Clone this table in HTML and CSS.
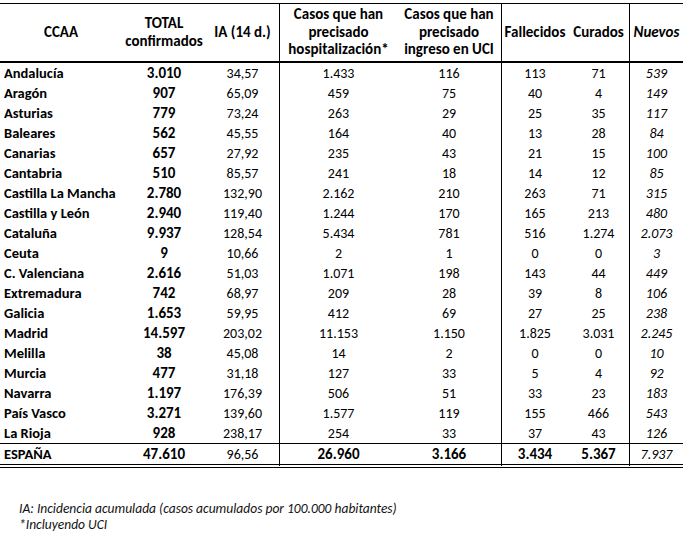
FILE: index.html
```html
<!DOCTYPE html>
<html lang="es">
<head>
<meta charset="utf-8">
<title>Casos COVID-19 por CCAA</title>
<link rel="stylesheet" href="styles.css">
</head>
<body>
<table class="data">
  <colgroup>
    <col class="c1"><col class="c2"><col class="c3"><col class="c4"><col class="c5"><col class="c6"><col class="c7"><col class="c8">
  </colgroup>
  <thead>
    <tr>
      <th>CCAA</th>
      <th>TOTAL<br>confirmados</th>
      <th>IA (14 d.)</th>
      <th class="sep">Casos que han<br>precisado<br>hospitalización*</th>
      <th>Casos que han<br>precisado<br>ingreso en UCI</th>
      <th class="sep">Fallecidos</th>
      <th>Curados</th>
      <th class="sep it">Nuevos</th>
    </tr>
  </thead>
  <tbody>
    <tr><td class="name">Andalucía</td><td class="b">3.010</td><td>34,57</td><td class="sep">1.433</td><td>116</td><td class="sep">113</td><td>71</td><td class="sep it">539</td></tr>
    <tr><td class="name">Aragón</td><td class="b">907</td><td>65,09</td><td class="sep">459</td><td>75</td><td class="sep">40</td><td>4</td><td class="sep it">149</td></tr>
    <tr><td class="name">Asturias</td><td class="b">779</td><td>73,24</td><td class="sep">263</td><td>29</td><td class="sep">25</td><td>35</td><td class="sep it">117</td></tr>
    <tr><td class="name">Baleares</td><td class="b">562</td><td>45,55</td><td class="sep">164</td><td>40</td><td class="sep">13</td><td>28</td><td class="sep it">84</td></tr>
    <tr><td class="name">Canarias</td><td class="b">657</td><td>27,92</td><td class="sep">235</td><td>43</td><td class="sep">21</td><td>15</td><td class="sep it">100</td></tr>
    <tr><td class="name">Cantabria</td><td class="b">510</td><td>85,57</td><td class="sep">241</td><td>18</td><td class="sep">14</td><td>12</td><td class="sep it">85</td></tr>
    <tr><td class="name">Castilla La Mancha</td><td class="b">2.780</td><td>132,90</td><td class="sep">2.162</td><td>210</td><td class="sep">263</td><td>71</td><td class="sep it">315</td></tr>
    <tr><td class="name">Castilla y León</td><td class="b">2.940</td><td>119,40</td><td class="sep">1.244</td><td>170</td><td class="sep">165</td><td>213</td><td class="sep it">480</td></tr>
    <tr><td class="name">Cataluña</td><td class="b">9.937</td><td>128,54</td><td class="sep">5.434</td><td>781</td><td class="sep">516</td><td>1.274</td><td class="sep it">2.073</td></tr>
    <tr><td class="name">Ceuta</td><td class="b">9</td><td>10,66</td><td class="sep">2</td><td>1</td><td class="sep">0</td><td>0</td><td class="sep it">3</td></tr>
    <tr><td class="name">C. Valenciana</td><td class="b">2.616</td><td>51,03</td><td class="sep">1.071</td><td>198</td><td class="sep">143</td><td>44</td><td class="sep it">449</td></tr>
    <tr><td class="name">Extremadura</td><td class="b">742</td><td>68,97</td><td class="sep">209</td><td>28</td><td class="sep">39</td><td>8</td><td class="sep it">106</td></tr>
    <tr><td class="name">Galicia</td><td class="b">1.653</td><td>59,95</td><td class="sep">412</td><td>69</td><td class="sep">27</td><td>25</td><td class="sep it">238</td></tr>
    <tr><td class="name">Madrid</td><td class="b">14.597</td><td>203,02</td><td class="sep">11.153</td><td>1.150</td><td class="sep">1.825</td><td>3.031</td><td class="sep it">2.245</td></tr>
    <tr><td class="name">Melilla</td><td class="b">38</td><td>45,08</td><td class="sep">14</td><td>2</td><td class="sep">0</td><td>0</td><td class="sep it">10</td></tr>
    <tr><td class="name">Murcia</td><td class="b">477</td><td>31,18</td><td class="sep">127</td><td>33</td><td class="sep">5</td><td>4</td><td class="sep it">92</td></tr>
    <tr><td class="name">Navarra</td><td class="b">1.197</td><td>176,39</td><td class="sep">506</td><td>51</td><td class="sep">33</td><td>23</td><td class="sep it">183</td></tr>
    <tr><td class="name">País Vasco</td><td class="b">3.271</td><td>139,60</td><td class="sep">1.577</td><td>119</td><td class="sep">155</td><td>466</td><td class="sep it">543</td></tr>
    <tr class="last"><td class="name">La Rioja</td><td class="b">928</td><td>238,17</td><td class="sep">254</td><td>33</td><td class="sep">37</td><td>43</td><td class="sep it">126</td></tr>
  </tbody>
  <tfoot>
    <tr class="total"><td class="name">ESPAÑA</td><td class="b">47.610</td><td>96,56</td><td class="sep b">26.960</td><td class="b">3.166</td><td class="sep b">3.434</td><td class="b">5.367</td><td class="sep it">7.937</td></tr>
  </tfoot>
</table>
<div class="notes">
  <p>IA: Incidencia acumulada (casos acumulados por 100.000 habitantes)</p>
  <p>*Incluyendo UCI</p>
</div>
</body>
</html>
```

FILE: styles.css
```css
html, body {
  margin: 0;
  padding: 0;
  background: #ffffff;
}
body {
  font-family: Carlito, Lato, "Open Sans", sans-serif;
  color: #000000;
}
.data {
  margin-top: 3px;
  width: 683px;
  table-layout: fixed;
  border-collapse: separate;
  border-spacing: 0;
  font-size: 14px;
}
.c1 { width: 122px; }
.c2 { width: 84px; }
.c3 { width: 73px; }
.c4 { width: 118px; }
.c5 { width: 104px; }
.c6 { width: 67px; }
.c7 { width: 61px; }
.c8 { width: 54px; }
.data th {
  height: 57px;
  padding: 0;
  font-size: 15px;
  font-weight: 700;
  line-height: 17.5px;
  text-align: center;
  vertical-align: middle;
  border-top: 1px solid #000;
  border-bottom: 2px solid #000;
  white-space: nowrap;
}
.data td {
  height: 19px;
  padding: 1px 0 0;
  line-height: 19px;
  text-align: center;
  vertical-align: middle;
  white-space: nowrap;
}
.data .sep {
  border-left: 1px solid #000;
}
.data td.name {
  text-align: left;
  padding-left: 4px;
  font-size: 14.5px;
  font-weight: 700;
}
.data td.b {
  font-size: 15px;
  font-weight: 700;
}
.data .it {
  font-style: italic;
}
.data tr.last td {
  height: 18px;
  border-bottom: 1px solid #000;
}
.data tr.total td {
  height: 19px;
  border-bottom: 4px double #000;
}
.notes {
  margin-top: 33px;
  padding-left: 19px;
  font-size: 13.5px;
  font-style: italic;
  line-height: 16px;
  color: #111;
}
.notes p {
  margin: 0;
}
```
